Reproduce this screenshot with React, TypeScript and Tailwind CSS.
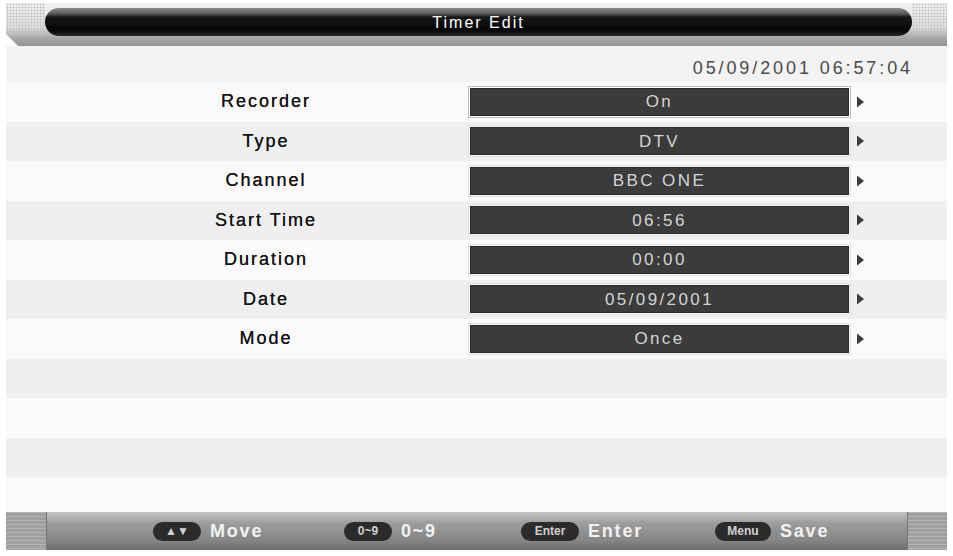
import React from 'react';

const rows = [
  { label: 'Recorder', value: 'On', focused: true },
  { label: 'Type', value: 'DTV' },
  { label: 'Channel', value: 'BBC ONE' },
  { label: 'Start Time', value: '06:56' },
  { label: 'Duration', value: '00:00' },
  { label: 'Date', value: '05/09/2001' },
  { label: 'Mode', value: 'Once' },
];

const hints = [
  { key: '▲▼', label: 'Move', keyW: 'w-[48px]' },
  { key: '0~9', label: '0~9', keyW: 'w-[48px]' },
  { key: 'Enter', label: 'Enter', keyW: 'w-[58px]' },
  { key: 'Menu', label: 'Save', keyW: 'w-[56px]' },
];

function Arrow() {
  return (
    <svg width="9" height="12" viewBox="0 0 9 12" className="shrink-0">
      <path d="M1 0.5 L8 6 L1 11.5 Z" fill="#3c3c3c" />
    </svg>
  );
}

export default function App() {
  return (
    <div className="w-[953px] h-[556px] bg-white overflow-hidden font-['Liberation_Sans',Arial,sans-serif]">
      {/* Header */}
      <div className="mx-[6px] mt-[3px] h-[43px] relative [clip-path:polygon(0_0,100%_0,100%_100%,12px_100%,0_31px)] bg-[linear-gradient(to_bottom,#f2f2f2_0%,#e0e0e0_55%,#acacac_78%,#939393_100%)]">
        <div className="flex items-start h-full">
          <div className="w-[39px] h-[34px] bg-[radial-gradient(circle,#c4c4c4_0.8px,transparent_1.2px)] bg-[length:3px_3px]" />
          <div className="flex-1 mt-[5px] h-[28px] rounded-full bg-[linear-gradient(to_bottom,#8a8a8a_0%,#5a5a5a_20%,#181818_32%,#050505_80%,#2a2a2a_100%)] flex items-center justify-center">
            <span className="text-white text-[16px] tracking-[2px] leading-none mt-[1px]">Timer Edit</span>
          </div>
          <div className="w-[35px] h-[34px] bg-[radial-gradient(circle,#c4c4c4_0.8px,transparent_1.2px)] bg-[length:3px_3px]" />
        </div>
      </div>

      {/* Body */}
      <div className="mx-[6px]">
        <div className="h-[36px] bg-[#f3f3f3] flex items-center justify-end pr-[34px]">
          <span className="text-[#4a4a4a] text-[18px] tracking-[2.9px] mt-[8px]">05/09/2001 06:57:04</span>
        </div>

        {rows.map((r, i) => (
          <div
            key={r.label}
            className={`h-[39.5px] flex items-center ${i % 2 === 0 ? 'bg-[#fafafa]' : 'bg-[#efefef]'}`}
          >
            <div className="w-[462px] pl-[58px] text-center text-[#141414] text-[18px] tracking-[2px] [text-shadow:0_0_0.3px_#141414]">
              {r.label}
            </div>
            <div
              className={`w-[383px] h-[32px] flex items-center p-[1px] ${
                r.focused ? 'border border-[#bdbdbd] bg-white' : 'border border-[#e2e2e2] bg-[#f4f4f4]'
              }`}
            >
              <div className="w-full h-full bg-[#3b3b3b] border border-[#2a2a2a] flex items-center justify-center">
                <span className="text-[#d4d4d4] text-[17px] tracking-[2.4px]">{r.value}</span>
              </div>
            </div>
            <div className="ml-[5px] flex items-center">
              <Arrow />
            </div>
          </div>
        ))}

        {[0, 1, 2, 3].map((n) => (
          <div
            key={n}
            className={`${n === 3 ? 'h-[35px]' : 'h-[39.5px]'} ${n % 2 === 0 ? 'bg-[#efefef]' : 'bg-[#fafafa]'}`}
          />
        ))}

        {/* Footer */}
        <div className="h-[38px] flex bg-[linear-gradient(to_bottom,#c4c4c4_0%,#9c9c9c_30%,#858585_75%,#6e6e6e_100%)]">
          <div className="w-[41px] h-full border-r border-[#777] bg-[repeating-linear-gradient(to_bottom,#b4b4b4_0px,#b4b4b4_1px,#a0a0a0_1px,#a0a0a0_4px)]" />
          <div className="flex-1 flex items-center">
            <div className="w-[106px]" />
            {hints.map((h, i) => (
              <div key={h.label} className={`flex items-center ${i === 0 ? 'w-[191px]' : i === 1 ? 'w-[177px]' : i === 2 ? 'w-[194px]' : ''}`}>
                <div
                  className={`${h.keyW} h-[19px] rounded-full bg-[#2b2b2b] flex items-center justify-center text-[#cfcfcf] text-[12px] font-bold leading-none`}
                >
                  {h.key}
                </div>
                <span className="ml-[9px] text-[#f2f2f2] text-[18px] font-bold tracking-[1.8px]">{h.label}</span>
              </div>
            ))}
          </div>
          <div className="w-[40px] h-full border-l border-[#777] bg-[repeating-linear-gradient(to_bottom,#b4b4b4_0px,#b4b4b4_1px,#a0a0a0_1px,#a0a0a0_4px)]" />
        </div>
      </div>
    </div>
  );
}
